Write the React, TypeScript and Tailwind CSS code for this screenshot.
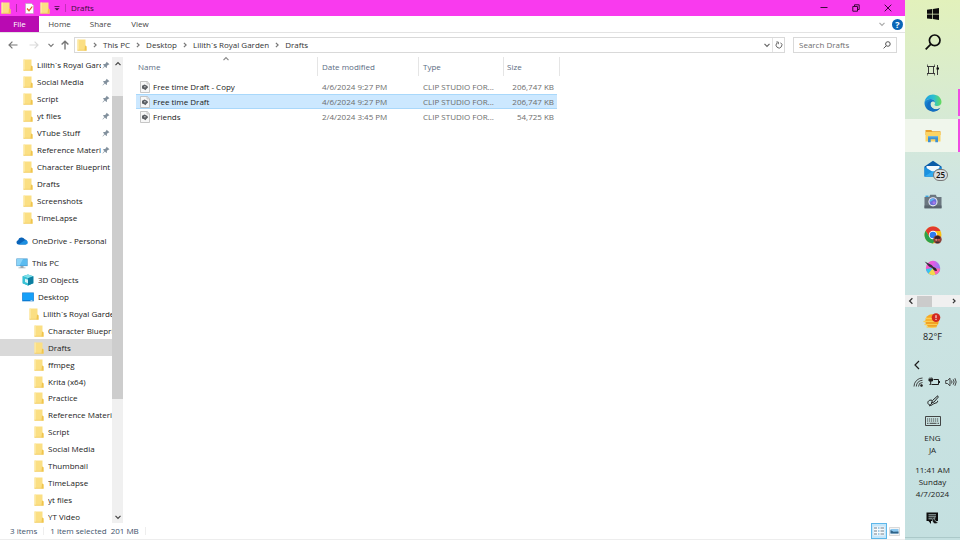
import React from "react";

type IconProps = { className?: string };

function Folder({ className = "w-[10px] h-3" }: IconProps) {
  return (
    <svg viewBox="0 0 10 12" className={`shrink-0 ${className}`} aria-hidden="true">
      <path d="M0.5 0.5h8v6l1 .8v4.2h-9z" fill="#fbdf83" />
      <path d="M0.5 0.5h1.3v11H0.5z" fill="#fdeaa8" />
      <path d="M8 6.600l1.500.8v4.100H7.500z" fill="#efc44d" />
      <path d="M0.5 10.8h9v.8h-9z" fill="#f2cc62" />
    </svg>
  );
}

function Chevron({ dir, className = "" }: { dir: "up" | "down" | "left" | "right"; className?: string }) {
  const paths = {
    up: "M1.5 5.2L4 2.7l2.5 2.5",
    down: "M1.5 2.8L4 5.3l2.5-2.5",
    left: "M5.4 1.3L2.6 4l2.8 2.7",
    right: "M2.9 1.8L5.1 4 2.9 6.2",
  };
  return (
    <svg viewBox="0 0 8 8" className={`size-2 shrink-0 ${className}`} fill="none" stroke="currentColor" strokeWidth="1.2" aria-hidden="true">
      <path d={paths[dir]} />
    </svg>
  );
}

function Pin() {
  return (
    <svg viewBox="0 0 10 10" className="size-2 shrink-0" aria-hidden="true">
      <path d="M5.8.8l3.5 3.4-1 .6-.6-.1-1.6 1.7.1 1.7-.8.7L3.7 7 1 9.4l-.4-.3L3 6.200 1.300 4.600l.8-.8 1.700.1 1.600-1.600-.1-.7z" fill="#82909d" />
    </svg>
  );
}

function Cloud() {
  return (
    <svg viewBox="0 0 12 8" className="h-2 w-3 shrink-0" aria-hidden="true">
      <path d="M2.400 7.600a2.200 2.200 0 0 1-.3-4.300A3.600 3.600 0 0 1 8.700 2.300a2.800 2.800 0 0 1 .8 5.300z" fill="#0a63b8" />
      <path d="M2.600 7.600l5-3.600a2.400 2.400 0 0 1 4.200 1.800 1.900 1.900 0 0 1-1.900 1.800z" fill="#1d8fe0" />
    </svg>
  );
}

function Monitor() {
  return (
    <svg viewBox="0 0 12 11" className="h-[11px] w-3 shrink-0" aria-hidden="true">
      <rect x=".4" y=".5" width="11.200" height="7.600" fill="#3c93cc" />
      <rect x="1" y="1.100" width="10" height="6.400" fill="#5cbcf0" />
      <path d="M1 1.100h6L3.500 7.500H1z" fill="#8bd4f8" />
      <path d="M4.500 8.100h3v1.300h2v.8h-7v-.8h2z" fill="#9aa7b0" />
    </svg>
  );
}

function Cube() {
  return (
    <svg viewBox="0 0 12 12" className="size-3 shrink-0" aria-hidden="true">
      <path d="M6 .5l5.300 1.800v7L6 11.500.7 9.300v-7z" fill="#1ba5bf" />
      <path d="M6 .5l5.300 1.800L6 4.300.7 2.300z" fill="#7fe0ea" />
      <path d="M.7 2.300L6 4.300v7.200L.7 9.300z" fill="#38c3d6" />
      <path d="M3 4.800l3 1v3.400l-3-1.100z" fill="#d8f5f8" />
      <path d="M6 4.300l5.300-2v7L6 11.500z" fill="#0d7ea0" />
    </svg>
  );
}

function DesktopIcon() {
  return (
    <svg viewBox="0 0 12 10" className="h-[10px] w-3 shrink-0" aria-hidden="true">
      <rect x=".2" y=".5" width="11.600" height="8.800" fill="#0b79d0" />
      <rect x=".8" y="1.100" width="10.400" height="7" fill="#17a0f8" />
      <path d="M8.500 8.300h2v.6h-2z" fill="#fff" />
    </svg>
  );
}

function ClipFile() {
  return (
    <svg viewBox="0 0 10 12" className="h-3 w-[10px] shrink-0" aria-hidden="true">
      <path d="M.5.500h6.700l2.300 2.300v8.700h-9z" fill="#f7f7f7" stroke="#b9b9b9" strokeWidth=".8" />
      <path d="M7 .6v2.300h2.400" fill="none" stroke="#b9b9b9" strokeWidth=".7" />
      <path d="M2 4.800l2.600-1.300 2.900 1.400.5 1.600-1.600 1.600-1 1.200-1.300-1L2 7.600z" fill="#5c5f63" />
      <circle cx="4.900" cy="5.800" r=".8" fill="#c9ccd0" />
    </svg>
  );
}

const quickAccess = [
  { name: "Lilith`s Royal Garden", pinned: true },
  { name: "Social Media", pinned: true },
  { name: "Script", pinned: true },
  { name: "yt files", pinned: true },
  { name: "VTube Stuff", pinned: true },
  { name: "Reference Material", pinned: true },
  { name: "Character Blueprint", pinned: false },
  { name: "Drafts", pinned: false },
  { name: "Screenshots", pinned: false },
  { name: "TimeLapse", pinned: false },
];

const subfolders = [
  "Character Blueprint", "Drafts", "ffmpeg", "Krita (x64)", "Practice", "Reference Material",
  "Script", "Social Media", "Thumbnail", "TimeLapse", "yt files", "YT Video",
];

const files = [
  { name: "Free time Draft - Copy", date: "4/6/2024 9:27 PM", size: "206,747 KB" },
  { name: "Free time Draft", date: "4/6/2024 9:27 PM", size: "206,747 KB" },
  { name: "Friends", date: "2/4/2024 3:45 PM", size: "54,725 KB" },
];

function TreeItem({ icon, label, indent, pinned, selected }: { icon: React.ReactNode; label: string; indent: string; pinned?: boolean; selected?: boolean }) {
  return (
    <li className={`flex min-h-0 min-w-0 ${selected ? "bg-[#d9d9d9]" : ""}`}>
      <button className={`flex w-full min-w-0 items-center text-left ${indent}`}>
        {icon}
        <span className="ml-1 min-w-0 flex-1 overflow-hidden whitespace-nowrap">{label}</span>
        {pinned && <span className="mr-[2px] ml-px flex"><Pin /></span>}
      </button>
    </li>
  );
}

function TitleBar() {
  return (
    <header className="flex h-4 shrink-0 items-center bg-[#f93aee] text-[#3d0b3a]">
      <span className="ml-px flex"><Folder /></span>
      <span className="ml-[5px] h-2 w-px bg-[#b32caa]" />
      <button aria-label="Properties" className="ml-2">
        <svg viewBox="0 0 9 11" className="h-[11px] w-[9px]"><path d="M.5.500h6l2 2v8h-8z" fill="#fff" stroke="#b6a3b5" strokeWidth=".6" /><path d="M2 5.500l2 2.200 3.300-4.200" fill="none" stroke="#e0562c" strokeWidth="1.200" /></svg>
      </button>
      <button aria-label="New folder" className="ml-[6px]"><Folder /></button>
      <button aria-label="Customize Quick Access Toolbar" className="ml-[3px]">
        <svg viewBox="0 0 8 8" className="size-2"><path d="M1.500 2.200h5v.8h-5zM1.500 4.200h5L4 6.600z" fill="currentColor" /></svg>
      </button>
      <span className="ml-1 h-2 w-px bg-[#c32fba]" />
      <h1 className="ml-[5px]">Drafts</h1>
      <div className="ml-auto flex h-full">
        <button aria-label="Minimize" className="flex w-8 items-center justify-center"><svg viewBox="0 0 8 8" className="size-2"><path d="M.5 3.500h7" stroke="currentColor" /></svg></button>
        <button aria-label="Restore" className="flex w-8 items-center justify-center"><svg viewBox="0 0 8 8" className="size-2" fill="none" stroke="currentColor"><path d="M.8 2.500h4.700v4.700H.8zM2.500 2.300V.8h4.700v4.700H5.700" /></svg></button>
        <button aria-label="Close" className="mr-px flex w-8 items-center justify-center"><svg viewBox="0 0 8 8" className="size-2" fill="none" stroke="currentColor"><path d="M.7.700l6.600 6.600M7.300.700L.7 7.300" /></svg></button>
      </div>
    </header>
  );
}

function Ribbon() {
  return (
    <div className="flex h-[17px] shrink-0 items-stretch border-b border-[#e3e3e3] text-[#444]">
      <button className="w-[39px] bg-[#b90ab2] text-white">File</button>
      <button className="w-[41px]">Home</button>
      <button className="w-[41px]">Share</button>
      <button className="w-[38px]">View</button>
      <div className="ml-auto flex items-center">
        <button aria-label="Expand the Ribbon" className="text-[#aaa]"><Chevron dir="down" /></button>
        <button aria-label="Help" className="mr-[2px] ml-[6px] flex size-[11px] items-center justify-center rounded-full bg-[#0a66b7] text-[9px] leading-none font-bold text-white">?</button>
      </div>
    </div>
  );
}

function AddressBar() {
  return (
    <div className="flex shrink-0 items-center py-1 pr-2 text-[#333]">
      <div className="flex w-[74px] items-center pl-2 text-[#777]">
        <button aria-label="Back"><svg viewBox="0 0 10 10" className="size-[10px]" fill="none" stroke="currentColor" strokeWidth="1.200"><path d="M9.500 5H1.200M4.400 1.600L1 5l3.400 3.400" /></svg></button>
        <button aria-label="Forward" className="ml-[11px] text-[#dadada]"><svg viewBox="0 0 10 10" className="size-[10px]" fill="none" stroke="currentColor" strokeWidth="1.200"><path d="M.5 5h8.300M5.600 1.600L9 5 5.600 8.400" /></svg></button>
        <button aria-label="Recent locations" className="ml-2"><Chevron dir="down" /></button>
        <button aria-label="Up" className="ml-[5px]"><svg viewBox="0 0 10 10" className="size-[10px]" fill="none" stroke="currentColor" strokeWidth="1.400"><path d="M5 9.500V1.200M1.600 4.600L5 1.200l3.400 3.400" /></svg></button>
      </div>
      <nav aria-label="Address" className="flex h-4 min-w-0 flex-1 items-center border border-[#d9d9d9] pl-[2px]">
        <Folder />
        {["This PC", "Desktop", "Lilith`s Royal Garden", "Drafts"].map((p) => (
          <React.Fragment key={p}>
            <Chevron dir="right" className="mx-1 text-[#777]" />
            <a href="#" className="whitespace-nowrap">{p}</a>
          </React.Fragment>
        ))}
        <button aria-label="Previous locations" className="mr-px ml-auto text-[#666]"><Chevron dir="down" /></button>
        <button aria-label="Refresh" className="flex h-full w-3 items-center justify-center border-l border-[#e3e3e3]">
          <svg viewBox="0 0 8 8" className="size-2" fill="none" stroke="#666"><path d="M2 2a2.900 2.900 0 1 0 3.600-.3M1.300 1h2v2.200" /></svg>
        </button>
      </nav>
      <label className="ml-2 flex h-4 w-[104px] items-center border border-[#d9d9d9] px-[5px]">
        <input type="search" aria-label="Search Drafts" placeholder="Search Drafts" className="min-w-0 flex-1 bg-transparent outline-none placeholder:text-[#6d6d6d]" />
        <svg viewBox="0 0 8 8" className="size-2" fill="none" stroke="#555" aria-hidden="true"><circle cx="4.900" cy="3" r="2.300" /><path d="M3.300 4.700L.6 7.400" /></svg>
      </label>
    </div>
  );
}

function NavigationPane() {
  return (
    <aside className="flex w-[124px] shrink-0">
      <nav aria-label="Folders" className="w-28 overflow-hidden text-[#222]">
        <ul className="grid h-[169px] auto-rows-fr grid-cols-1">
          {quickAccess.map((f) => (
            <TreeItem key={f.name} icon={<Folder />} label={f.name} indent="pl-[23px]" pinned={f.pinned} />
          ))}
        </ul>
        <ul className="my-[6px] grid h-[17px] grid-cols-1">
          <TreeItem icon={<Cloud />} label="OneDrive - Personal" indent="pl-4" />
        </ul>
        <ul className="grid h-[270px] auto-rows-fr grid-cols-1">
          <TreeItem icon={<Monitor />} label="This PC" indent="pl-4" />
          <TreeItem icon={<Cube />} label="3D Objects" indent="pl-[22px]" />
          <TreeItem icon={<DesktopIcon />} label="Desktop" indent="pl-[22px]" />
          <TreeItem icon={<Folder />} label="Lilith`s Royal Garden" indent="pl-[29px]" />
          {subfolders.map((f) => (
            <TreeItem key={f} icon={<Folder />} label={f} indent="pl-[34px]" selected={f === "Drafts"} />
          ))}
        </ul>
      </nav>
      <div className="flex w-[11px] flex-col items-center bg-[#f0f0f0] text-[#444]">
        <button aria-label="Scroll up" className="flex h-[13px] items-center"><Chevron dir="up" /></button>
        <div className="mt-[26px] h-[303px] w-full bg-[#cdcdcd]" />
        <button aria-label="Scroll down" className="mt-auto flex h-[13px] items-center"><Chevron dir="down" /></button>
      </div>
    </aside>
  );
}

function FileList() {
  const head = "border-r border-[#e5e5e5] pl-1 text-left font-normal";
  return (
    <main className="min-w-0 flex-1 pl-3">
      <table className="w-[424px] table-fixed border-separate border-spacing-0">
        <colgroup>
          <col className="w-[182px]" /><col className="w-[101px]" /><col className="w-[85px]" /><col className="w-[53px]" /><col className="w-[3px]" />
        </colgroup>
        <thead>
          <tr className="h-[19px] text-[#5a6b82]">
            <th className="relative border-r border-[#e5e5e5] pl-[2px] text-left font-normal">
              Name
              <Chevron dir="up" className="absolute -top-[2px] left-[86px] text-[#888]" />
            </th>
            <th className={head}>Date modified</th>
            <th className={head}>Type</th>
            <th className="pl-[3px] text-left font-normal">Size</th>
            <td className="border-r border-[#e5e5e5]" />
          </tr>
        </thead>
        <tbody className="text-[#6d6d6d]">
          <tr className="h-[3px]"><td colSpan={5} className="p-0" /></tr>
          {files.map((f, i) => {
            const line = i === 1 ? "border-y border-[#a9d8fb] bg-[#cce8ff]" : "";
            return (
              <tr key={f.name} className="h-[15px]" aria-selected={i === 1}>
                <td className={`p-0 ${line}`}>
                  <button className="flex items-center gap-[3px] pl-1 text-[#222]"><ClipFile />{f.name}</button>
                </td>
                <td className={`py-0 pl-1 ${line}`}>{f.date}</td>
                <td className={`py-0 pl-1 whitespace-nowrap ${line}`}>CLIP STUDIO FOR...</td>
                <td className={`py-0 pr-[3px] text-right whitespace-nowrap ${line}`}>{f.size}</td>
                <td className="p-0" />
              </tr>
            );
          })}
        </tbody>
      </table>
    </main>
  );
}

function StatusBar() {
  return (
    <footer className="flex h-[17px] shrink-0 items-center border-b border-[#ededed] pl-[10px] text-[#41536b]">
      <span>3 items</span>
      <span className="mx-[6px] h-2 w-px bg-[#eee]" />
      <span>1 item selected</span>
      <span className="ml-1">201 MB</span>
      <span className="ml-[6px] h-2 w-px bg-[#eee]" />
      <div className="mr-[5px] ml-auto flex h-full items-center">
        <button aria-label="Details view" className="flex size-4 items-center justify-center border border-[#5db7ea] bg-[#c5e6fa]">
          <svg viewBox="0 0 12 10" className="h-[10px] w-3"><path d="M.5.500h11v9H.5z" fill="#f8fbfd" /><path d="M1 2h3M1 5h3M1 8h3M7.500 2H11M7.500 5H11M7.500 8H11" stroke="#6f7f8c" /><path d="M5 2h1.500M5 5h1.500M5 8h1.500" stroke="#4a9ad3" /></svg>
        </button>
        <button aria-label="Large thumbnails" className="ml-[2px]">
          <svg viewBox="0 0 11 9" className="h-[9px] w-[11px]"><path d="M.5.500h10v8H.5z" fill="#f5f5f5" stroke="#c2c2c2" strokeWidth=".6" /><path d="M1.500 2h8v4.500h-8z" fill="#8cc8f0" /><path d="M1.500 3L4.500 4.800l5-.3v2h-8z" fill="#2f6287" /></svg>
        </button>
      </div>
    </footer>
  );
}

function EdgeIcon() {
  return (
    <svg viewBox="0 0 18 18" className="size-[18px]" aria-hidden="true">
      <defs>
        <linearGradient id="edgeTop" x1="0" x2="1"><stop offset="0" stopColor="#1e9fe0" /><stop offset=".55" stopColor="#2cc0cf" /><stop offset="1" stopColor="#66dc58" /></linearGradient>
        <linearGradient id="edgeLow" x1="0" x2="1" y2="1"><stop offset="0" stopColor="#1a90dc" /><stop offset="1" stopColor="#0b4f9e" /></linearGradient>
      </defs>
      <path d="M.5 8.500C1 4 4.500.5 9 .5c5 0 8.500 3.700 8.500 7.500 0 2.500-2 4-4.300 4-2 0-2.700-.8-2.700-1.300 0-.4.600-.8.600-2C11.100 6.500 9 5 6.500 5 3.500 5 1.300 6.500.5 8.500z" fill="url(#edgeTop)" />
      <path d="M.5 8.500C1.300 6.500 3.500 5 6.500 5 9 5 11.100 6.500 11.100 8.700c-.6-.9-1.500-1.300-2.400-1.200C6.800 7.700 6 9.500 6.500 11.300c.6 2.400 2.900 3.900 5.300 3.900 1.800 0 3.200-.6 4.600-1.500C15 16 12.300 17.500 9.300 17.500 4.300 17.500.2 13.500.5 8.500z" fill="url(#edgeLow)" />
      <path d="M3.600 8.800c-.8 3.500 1 7.600 4.700 8.600 2.500.4 5.300-.7 7-2.600-3.800 1.600-8 .3-8.800-3.500-.4-1.800.4-3.400 1.600-3.800-1.800-.6-3.700-.2-4.500 1.300z" fill="#1270c4" />
    </svg>
  );
}

function ExplorerIcon() {
  return (
    <svg viewBox="0 0 16 14" className="h-[14px] w-4" aria-hidden="true">
      <path d="M.5 1h5.800l1 1.200h8.200V6H.5z" fill="#e8a02c" />
      <path d="M.5 3h15v9.500H.5z" fill="#fcd462" />
      <path d="M3 7.300h10v6H10.300V10.200H5.700v3.100H3z" fill="#3d91d1" />
      <path d="M3 7.300h10v1H3z" fill="#72bdea" />
    </svg>
  );
}

function MailIcon() {
  return (
    <svg viewBox="0 0 18 18" className="size-[18px]" aria-hidden="true">
      <path d="M.5 6.500L9 .7l8.500 5.800V16.500H.5z" fill="#0b5ca8" />
      <path d="M2.500 6h13v6h-13z" fill="#f4f9fd" />
      <path d="M.5 6.800L9 12l8.500-5.200v9.700H.5z" fill="#1a91e0" />
      <path d="M.5 16.500L9 11l8.500 5.500z" fill="#2faaf0" />
    </svg>
  );
}

function CameraIcon() {
  return (
    <svg viewBox="0 0 18 15" className="h-[15px] w-[18px]" aria-hidden="true">
      <path d="M.5 3h4.700l1-2.300h5.600L12.800 3h4.700v11.300H.5z" fill="#6b7780" />
      <path d="M1.500 1.600h3V3h-3z" fill="#37a6e2" />
      <path d="M.5 11.500h17v2.800H.5z" fill="#59656e" />
      <circle cx="9" cy="7.800" r="4.600" fill="#e8edf2" />
      <circle cx="9" cy="7.800" r="3.500" fill="#6b6fd8" />
      <path d="M5.800 8a3.300 3.300 0 0 1 5-3z" fill="#57bdf0" />
      <circle cx="10" cy="8.800" r="1.500" fill="#a779e8" />
    </svg>
  );
}

function ChromeIcon() {
  return (
    <svg viewBox="0 0 18 18" className="size-[18px]" aria-hidden="true">
      <circle cx="9" cy="9" r="8.500" fill="#fbc116" />
      <path d="M9 5h7.500a8.500 8.500 0 0 0-14.860-.25L5.500 11z" fill="#e23a2e" />
      <path d="M1.640 4.750A8.500 8.500 0 0 0 9 17.500l3.500-6.500H5.500z" fill="#2ba24c" />
      <circle cx="9" cy="9" r="4.200" fill="#fff" />
      <circle cx="9" cy="9" r="3.300" fill="#2e7cf0" />
      <circle cx="13.500" cy="13.500" r="4.200" fill="#8d4038" />
      <path d="M10.800 11.200q2.700-2.800 5.400 0l-.4 1.800h-4.600z" fill="#3a2226" />
      <circle cx="12.300" cy="13.800" r="1.100" fill="#d7867a" /><circle cx="14.900" cy="13.800" r="1.100" fill="#c8524a" />
      <path d="M11.800 16.300h3.600" stroke="#282a38" />
    </svg>
  );
}

function KritaIcon() {
  return (
    <svg viewBox="0 0 18 18" className="size-[18px]" aria-hidden="true">
      <defs><linearGradient id="krita" x1="0" x2="1" y2=".3"><stop offset="0" stopColor="#ff5ab4" /><stop offset=".5" stopColor="#e45be6" /><stop offset="1" stopColor="#8f7df5" /></linearGradient></defs>
      <circle cx="9" cy="9" r="7.200" fill="url(#krita)" />
      <path d="M1.900 10L9 9l7.200 1a7.200 7.200 0 0 1-14.300 0z" fill="#37c5ee" />
      <path d="M4.500 14.600L9 9l3 6.500a7.200 7.200 0 0 1-7.500-.9z" fill="#f4d84a" />
      <path d="M9 9l7.200.5a7.200 7.200 0 0 1-4.600 6.200z" fill="#ff62b0" />
      <path d="M.6 2.500l7 3.500 2.400 2.500-1 .9-4-1.900z" fill="#34323f" />
      <path d="M9 8.300c2-.3 3.700 1 3.900 3.600-1.900.2-3.800-.6-4.300-2.800z" fill="#26242e" />
    </svg>
  );
}

function Taskbar() {
  const app = "relative flex h-[33px] w-full shrink-0 items-center justify-center";
  const tool = "flex h-7 w-full shrink-0 items-center justify-center";
  return (
    <aside aria-label="Taskbar" className="flex w-[55px] shrink-0 flex-col items-center overflow-hidden bg-linear-to-b from-[#e2f1bb] via-[#cfe5e3] via-35% to-[#c4e0e0] text-[#1c1c1c]">
      <button aria-label="Start" className={tool}><svg viewBox="0 0 12 12" className="size-3"><path d="M0 1.700l5.200-.7v4.700H0zM5.900.900L12 0v5.700H5.900zM0 6.400h5.200v4.700L0 10.400zM5.900 6.400H12V12l-6.100-.9z" fill="#0c0c0c" /></svg></button>
      <button aria-label="Search" className={tool}><svg viewBox="0 0 16 16" className="size-4" fill="none" stroke="#0c0c0c" strokeWidth="1.700"><circle cx="9.700" cy="6.300" r="5.300" /><path d="M5.900 10.100L.7 15.300" /></svg></button>
      <button aria-label="Task View" className={tool}><svg viewBox="0 0 12 12" className="size-3" fill="none" stroke="#3a3a3a"><path d="M0 2.500h8M0 9.500h8M1.500 2.500v7M6.500 2.500v7M10.500 1v10" /><path d="M.5.500v2M7.500.5v2M.5 9.500v2M7.500 9.500v2" strokeWidth=".7" /><path d="M9.500 4.500h2.500" stroke="#111" strokeWidth="2" /></svg></button>
      <button aria-label="Microsoft Edge" className={`mt-[2px] ${app}`}><EdgeIcon /><span className="absolute top-[3px] right-0 h-[27px] w-[2px] bg-[#f04be3]" /></button>
      <button aria-label="File Explorer" className={`bg-[#f0f6ec] ${app}`}><ExplorerIcon /><span className="absolute inset-y-0 right-0 w-[2px] bg-[#f04be3]" /></button>
      <button aria-label="Mail" className={app}><MailIcon /><span className="absolute top-[17px] right-3 flex h-3 w-[15px] items-center justify-center rounded-full border border-[#777] bg-[#d9dde0] font-semibold text-[#111]">25</span></button>
      <button aria-label="Camera" className={app}><CameraIcon /></button>
      <button aria-label="Google Chrome" className={app}><ChromeIcon /></button>
      <button aria-label="Krita" className={app}><KritaIcon /></button>
      <div className="mt-[11px] flex h-3 w-full shrink-0 items-center bg-[#f0f0f0] px-[2px] text-[#333]">
        <button aria-label="Scroll left"><Chevron dir="left" /></button>
        <div className="ml-[2px] h-[11px] w-[15px] bg-[#cbcbcb]" />
        <button aria-label="Scroll right" className="ml-auto"><Chevron dir="right" /></button>
      </div>
      <button className="mt-[6px] flex shrink-0 flex-col items-center text-[9px]">
        <svg viewBox="0 0 18 16" className="h-4 w-[18px]" aria-hidden="true"><circle cx="9" cy="8" r="6.800" fill="#f7a823" /><path d="M1 8.500h14M2 11.500h12M4 14h9M3 5.500h9" stroke="#f9cf55" strokeWidth="1.300" strokeLinecap="round" /><path d="M3 10h12M5 13h9" stroke="#e88b14" strokeWidth=".8" /><circle cx="13" cy="4.600" r="4.300" fill="#d3281f" /><path d="M13 2.200v3M13 6v1" stroke="#fff" /></svg>
        <span className="mt-[2px] leading-3">82°F</span>
      </button>
      <button aria-label="Show hidden icons" className="mt-[17px] mr-8 flex h-[10px] shrink-0 items-center"><svg viewBox="0 0 8 10" className="h-[10px] w-2" fill="none" stroke="#1c1c1c" strokeWidth="1.200"><path d="M6 1L2 5l4 4" /></svg></button>
      <div className="mt-[6px] flex h-3 w-full shrink-0 items-center justify-between pr-[3px] pl-2">
        <button aria-label="Network"><svg viewBox="0 0 10 10" className="size-[10px]" fill="none" stroke="#333" strokeWidth=".9"><path d="M1 9.500A8.500 8.500 0 0 1 9.500 1M3.300 9.500A6.200 6.200 0 0 1 9.500 3.300M5.500 9.500a4 4 0 0 1 4-4" /><circle cx="8.500" cy="8.500" r="1" fill="#222" /></svg></button>
        <button aria-label="Battery"><svg viewBox="0 0 12 10" className="h-[10px] w-3" fill="none" stroke="#1c1c1c"><path d="M5.500 2.500H10.500v5H3.500M11.500 4v2M1 1.500v2.500h3.500V1.500M2.700 4v3.500H1.500M2 .5v1M3.700.5v1" /><path d="M1.500 2h3v1.500h-3z" fill="#1c1c1c" /></svg></button>
        <button aria-label="Volume"><svg viewBox="0 0 12 10" className="h-[10px] w-3" fill="none" stroke="#333" strokeWidth=".9"><path d="M.7 3.500h1.800L5 1.200v7.600L2.500 6.500H.7zM6.500 3.500q1 1.500 0 3M8.200 2.300q1.900 2.700 0 5.400M9.900 1.200q2.600 3.800 0 7.600" /></svg></button>
      </div>
      <button aria-label="Windows Ink Workspace" className="mt-[7px] shrink-0"><svg viewBox="0 0 12 12" className="size-3" fill="none" stroke="#222"><path d="M10.700.8L5.500 5.500 4.500 8l2.400-.9 4.300-4.900zM5 5.300C2 4.500.3 6.700 1 8.500s2.500 1.100 2.500 1.100L5 8M2 10.800c3-.2 3.500-1.700 6-2.600 1.700-.5 3-.5 2.500-2.400" /></svg></button>
      <button aria-label="Touch keyboard" className="mt-[9px] shrink-0"><svg viewBox="0 0 16 10" className="h-[10px] w-4" fill="none" stroke="#333" strokeWidth=".9"><path d="M.5.500h15v9H.5z" /><path d="M2 3h12M2 5h12" strokeDasharray="1.200 .8" /><path d="M2 7.300h1.500M4.500 7.300h7M12.500 7.300H14" /></svg></button>
      <button className="mt-[6px] shrink-0 leading-3">ENG<br />JA</button>
      <button className="mt-2 shrink-0 leading-3">11:41 AM<br />Sunday<br />4/7/2024</button>
      <button aria-label="Notifications" className="mt-3 shrink-0"><svg viewBox="0 0 13 13" className="size-[13px]"><path d="M.5.500h11.500v8.500H5v3L2.500 9h-2z" fill="#0d0d0d" /><path d="M2.500 2.800h7.500M2.500 4.800h7.500M2.500 6.800h4" stroke="#c9e2e2" strokeWidth=".8" /><path d="M8.800 5.800a3 3 0 1 0 3.500 4 3 3 0 0 1-3.500-4z" fill="#111" stroke="#c9e2e2" strokeWidth=".6" /></svg></button>
      <span className="mt-auto mb-[2px] h-px w-full shrink-0 bg-[#abc9c9]" />
    </aside>
  );
}

export default function App() {
  return (
    <div className="flex h-screen overflow-hidden bg-white font-['Open_Sans','Noto_Sans',sans-serif] text-[8px] leading-[12px]">
      <div className="flex min-w-0 flex-1 flex-col">
        <TitleBar />
        <Ribbon />
        <AddressBar />
        <div className="flex min-h-0 flex-1">
          <NavigationPane />
          <FileList />
        </div>
        <StatusBar />
      </div>
      <Taskbar />
    </div>
  );
}
